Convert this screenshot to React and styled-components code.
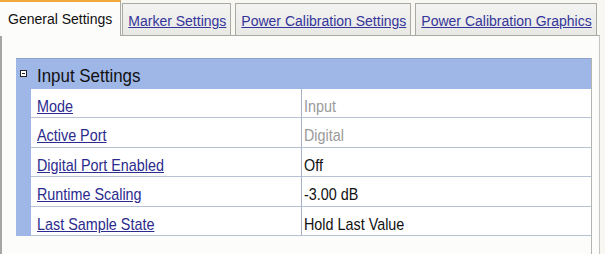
import React from "react";
import styled, { createGlobalStyle } from "styled-components";

const GlobalStyle = createGlobalStyle`
  html, body {
    margin: 0;
    padding: 0;
    background: #fbfbf9;
  }
  #root {
    width: 605px;
    height: 254px;
    overflow: hidden;
  }
`;

const Window = styled.div`
  width: 605px;
  height: 254px;
  display: flex;
  flex-direction: column;
  background: #f8f7f2;
  font-family: "Liberation Sans", Arial, sans-serif;
`;

const TabStrip = styled.div`
  display: flex;
  align-items: flex-end;
  height: 35px;
  position: relative;
  z-index: 1;
`;

const Tab = styled.div`
  box-sizing: border-box;
  height: ${(p) => (p.$active ? "36px" : "32px")};
  margin: ${(p) => (p.$active ? "0 1px -1px 0" : "0 4px 0 0")};
  padding: ${(p) => (p.$active ? "9px 8px 0 8px" : "9px 4px 0 5px")};
  background: ${(p) => (p.$active ? "#fcfcfa" : "linear-gradient(#f3f3f1, #e8e8e5)")};
  border: 1px solid #a9a9a6;
  border-top: ${(p) => (p.$active ? "2px solid #f2a93b" : "1px solid #a9a9a6")};
  border-left: ${(p) => (p.$active ? "none" : "1px solid #a9a9a6")};
  border-bottom: none;
  font-size: 14px;
  line-height: 16px;
  white-space: nowrap;
  color: ${(p) => (p.$active ? "#111" : "#34349a")};
  text-decoration: ${(p) => (p.$active ? "none" : "underline")};
`;

const Panel = styled.div`
  flex: 1;
  display: flex;
  width: 600px;
  box-sizing: border-box;
  background: #fcfcfa;
  border-top: 1px solid #a9a9a6;
  border-left: 2px solid #a6a6a3;
  border-right: 1px solid #c4c4c0;
  padding: 22px 0 0 14px;
`;

const PropertyGrid = styled.div`
  width: 576px;
  box-sizing: border-box;
  border-right: 1px solid #b4b4b0;
`;

const GroupHeader = styled.div`
  box-sizing: border-box;
  height: 31px;
  display: flex;
  align-items: flex-start;
  background: #9fb7e7;
  border-top: 1px solid #8ea3cc;
  padding: 11px 0 0 4px;
  gap: 10px;
`;

const Toggle = styled.span`
  box-sizing: border-box;
  flex: none;
  width: 7px;
  height: 7px;
  border: 1px solid #222;
  background: #fff;
  display: flex;
  align-items: center;
  justify-content: center;
  &::after {
    content: "";
    width: 3px;
    height: 1px;
    background: #222;
  }
`;

const GroupTitle = styled.span`
  display: inline-block;
  font-size: 19px;
  line-height: 19px;
  margin-top: -4px;
  color: #111;
  white-space: nowrap;
  transform: scaleX(0.89);
  transform-origin: left center;
`;

const Row = styled.div`
  display: grid;
  grid-template-columns: 15px 271px 289px;
  height: 29.4px;
`;

const Strip = styled.div`
  background: #9fb7e7;
`;

const Cell = styled.div`
  box-sizing: border-box;
  background: #fff;
  border-bottom: 1px solid #b8c2d5;
  border-right: ${(p) => (p.$name ? "1px solid #a7b1c4" : "none")};
  padding: 8px 0 0 ${(p) => (p.$name ? "6px" : "2px")};
  font-size: 17px;
  line-height: 20px;
  white-space: nowrap;
`;

const Narrow = styled.span`
  display: inline-block;
  transform: scaleX(0.845);
  transform-origin: left center;
`;

const Link = styled(Narrow)`
  color: #2b2b8e;
  text-decoration: underline;
`;

const Value = styled(Narrow)`
  color: ${(p) => (p.$readonly ? "#9a9a9a" : "#111")};
`;

const rows = [
  { name: "Mode", value: "Input", readonly: true },
  { name: "Active Port", value: "Digital", readonly: true },
  { name: "Digital Port Enabled", value: "Off" },
  { name: "Runtime Scaling", value: "-3.00 dB" },
  { name: "Last Sample State", value: "Hold Last Value" },
];

const tabs = [
  "General Settings",
  "Marker Settings",
  "Power Calibration Settings",
  "Power Calibration Graphics",
];

export default function App() {
  return (
    <>
      <GlobalStyle />
      <Window>
        <TabStrip>
          {tabs.map((t, i) => (
            <Tab key={t} $active={i === 0}>
              {t}
            </Tab>
          ))}
        </TabStrip>
        <Panel>
          <PropertyGrid>
            <GroupHeader>
              <Toggle />
              <GroupTitle>Input Settings</GroupTitle>
            </GroupHeader>
            {rows.map((r) => (
              <Row key={r.name}>
                <Strip />
                <Cell $name>
                  <Link>{r.name}</Link>
                </Cell>
                <Cell>
                  <Value $readonly={r.readonly}>{r.value}</Value>
                </Cell>
              </Row>
            ))}
          </PropertyGrid>
        </Panel>
      </Window>
    </>
  );
}
